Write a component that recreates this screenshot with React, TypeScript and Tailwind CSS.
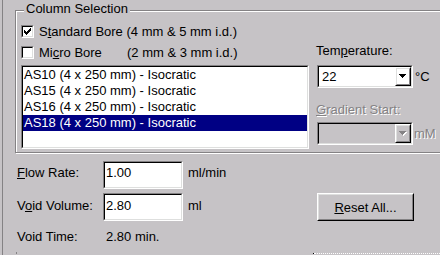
import type { ReactNode } from "react";

const columns = [
  "AS10 (4 x 250 mm) - Isocratic",
  "AS15 (4 x 250 mm) - Isocratic",
  "AS16 (4 x 250 mm) - Isocratic",
  "AS18 (4 x 250 mm) - Isocratic",
];

function Sunken({
  className = "",
  innerClass = "",
  children,
}: {
  className?: string;
  innerClass?: string;
  children?: ReactNode;
}) {
  return (
    <div
      className={`border border-t-[#848284] border-l-[#848284] border-b-white border-r-white ${className}`}
    >
      <div
        className={`h-full border border-t-black border-l-black border-b-[#dedfde] border-r-[#dedfde] ${innerClass}`}
      >
        {children}
      </div>
    </div>
  );
}

function Raised({ className = "", children }: { className?: string; children?: ReactNode }) {
  return (
    <div className={`border border-t-white border-l-white border-b-black border-r-black ${className}`}>
      <div className="flex h-full items-center justify-center border border-t-[#dedfde] border-l-[#dedfde] border-b-[#848284] border-r-[#848284]">
        {children}
      </div>
    </div>
  );
}

function Check() {
  // classic 7x7 tick
  const px = [
    [6, 0], [5, 1], [6, 1], [0, 2], [4, 2], [5, 2], [6, 2],
    [0, 3], [1, 3], [3, 3], [4, 3], [5, 3],
    [0, 4], [1, 4], [2, 4], [3, 4], [4, 4],
    [1, 5], [2, 5], [3, 5], [2, 6],
  ];
  return (
    <svg width="7" height="7" shapeRendering="crispEdges" aria-hidden>
      {px.map(([x, y]) => (
        <rect key={`${x}-${y}`} x={x} y={y} width="1" height="1" fill="#000" />
      ))}
    </svg>
  );
}

function Checkbox({ checked }: { checked?: boolean }) {
  return (
    <Sunken className="h-[13px] w-[13px] shrink-0" innerClass="flex items-center justify-center bg-white">
      {checked && <Check />}
    </Sunken>
  );
}

function DropArrow({ disabled }: { disabled?: boolean }) {
  const fill = disabled ? "#848284" : "#000";
  return (
    <svg width="8" height="5" shapeRendering="crispEdges" aria-hidden>
      {disabled && <path d="M1 1h7L4.5 5z" fill="#fff" />}
      <path d="M0 0h7v1h-1v1h-1v1h-1v1h-1v-1h-1v-1h-1v-1h-1z" fill={fill} />
    </svg>
  );
}

function Combo({ value, disabled }: { value?: string; disabled?: boolean }) {
  return (
    <Sunken
      className="ml-[1px] h-[23px] w-[96px]"
      innerClass={`flex ${disabled ? "bg-[#c6c3c6]" : "bg-white"}`}
    >
      <div className="flex-1 pl-[3px] pt-[2px]">{value}</div>
      <Raised className="h-[19px] w-[16px]">
        <DropArrow disabled={disabled} />
      </Raised>
    </Sunken>
  );
}

const disabledText = "text-[#848284] [text-shadow:1px_1px_0_#fff]";

export default function App() {
  return (
    <div className="h-[255px] w-[440px] overflow-hidden bg-[#c6c3c6] font-['Liberation_Sans',Arial,sans-serif] text-[13px] leading-[15px] text-black">
      <div className="ml-[2px] flex h-full flex-col border-l border-[#848284]">
        {/* Column Selection group */}
        <div className="relative ml-[12px] mt-[10px] flex h-[143px] w-[440px] shrink-0 border border-[#848284] shadow-[inset_1px_1px_0_#fff,1px_1px_0_#fff]">
          <span className="absolute left-[8px] top-[-10px] bg-[#c6c3c6] px-[2px]">Column Selection</span>

          <div className="flex w-[293px] flex-col pl-[5px] pt-[13px] whitespace-nowrap">
            <div className="flex items-start gap-[5px]">
              <div className="mt-[1px]">
                <Checkbox checked />
              </div>
              <span>
                S<u>t</u>andard Bore (4 mm &amp; 5 mm i.d.)
              </span>
            </div>
            <div className="mt-[6px] flex items-start gap-[5px]">
              <div className="mt-[1px]">
                <Checkbox />
              </div>
              <span className="w-[83px]">
                Mi<u>c</u>ro Bore
              </span>
              <span>(2 mm &amp; 3 mm i.d.)</span>
            </div>
            <Sunken className="mt-[5px] h-[84px] w-[288px]" innerClass="bg-white">
              {columns.map((c, i) => (
                <div
                  key={c}
                  className={`h-[16px] pl-[1px] leading-[16px] ${i === 3 ? "bg-[#000084] text-white" : ""}`}
                >
                  {c}
                </div>
              ))}
            </Sunken>
          </div>

          <div className="ml-[7px] flex flex-col pt-[32px]">
            <span>
              Tem<u>p</u>erature:
            </span>
            <div className="mt-[7px] flex items-center gap-[2px]">
              <Combo value="22" />
              <span>°C</span>
            </div>
            <span className={`mt-[14px] ${disabledText}`}>
              <u>G</u>radient Start:
            </span>
            <div className="mt-[5px] flex items-center gap-[1px]">
              <Combo disabled />
              <span className={disabledText}>mM</span>
            </div>
          </div>
        </div>

        {/* Flow settings */}
        <div className="flex flex-col pl-[14px] pt-[8px]">
          <div className="flex items-start">
            <span className="w-[86px] pt-[4px]">
              <u>F</u>low Rate:
            </span>
            <Sunken className="h-[28px] w-[80px]" innerClass="bg-white pl-[1px] pt-[2px]">
              1.00
            </Sunken>
            <span className="ml-[5px] pt-[4px]">ml/min</span>
          </div>
          <div className="mt-[4px] flex items-start">
            <span className="w-[86px] pt-[5px]">
              V<u>o</u>id Volume:
            </span>
            <Sunken className="h-[28px] w-[80px]" innerClass="bg-white pl-[1px] pt-[3px]">
              2.80
            </Sunken>
            <span className="ml-[5px] w-[129px] pt-[5px]">ml</span>
            <Raised className="h-[28px] w-[97px]">
              <span>
                <u>R</u>eset All...
              </span>
            </Raised>
          </div>
          <div className="mt-[8px] flex">
            <span className="w-[89px]">Void Time:</span>
            <span>2.80 min.</span>
          </div>
        </div>

        <div className="mt-[8px] flex h-[2px] items-end pl-[13px]">
          <div className="h-[2px] w-[1px] bg-[#848284]" />
          <div className="ml-[296px] h-[1px] w-[1px] bg-black" />
          <div className="h-0 flex-1 border-t border-dotted border-white" />
        </div>
      </div>
    </div>
  );
}
